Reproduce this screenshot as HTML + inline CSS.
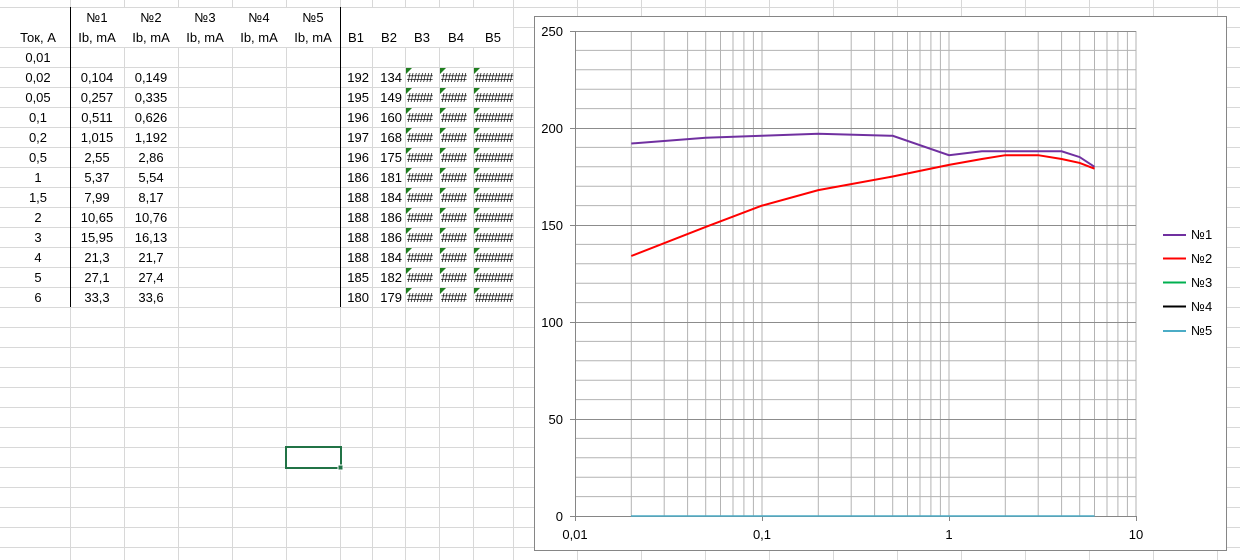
<!DOCTYPE html>
<html><head><meta charset="utf-8"><style>
body{margin:0;background:#fff;width:1240px;height:560px;overflow:hidden}
svg{display:block}
text{font-family:"Liberation Sans",sans-serif;font-size:13px;fill:#000}
</style></head><body>
<svg width="1240" height="560" viewBox="0 0 1240 560">
<g stroke="#d8d8d8" stroke-width="1" fill="none">
<path d="M0 7.5H1240M0 27.5H1240M0 47.5H1240M0 67.5H1240M0 87.5H1240M0 107.5H1240M0 127.5H1240M0 147.5H1240M0 167.5H1240M0 187.5H1240M0 207.5H1240M0 227.5H1240M0 247.5H1240M0 267.5H1240M0 287.5H1240M0 307.5H1240M0 327.5H1240M0 347.5H1240M0 367.5H1240M0 387.5H1240M0 407.5H1240M0 427.5H1240M0 447.5H1240M0 467.5H1240M0 487.5H1240M0 507.5H1240M0 527.5H1240M0 547.5H1240"/>
<path d="M70.5 0V560M124.5 0V560M178.5 0V560M232.5 0V560M286.5 0V560M340.5 0V560M372.5 0V560M405.5 0V560M439.5 0V560M473.5 0V560M513.5 0V560M577.5 0V560M641.5 0V560M705.5 0V560M769.5 0V560M833.5 0V560M897.5 0V560M961.5 0V560M1025.5 0V560M1089.5 0V560M1153.5 0V560M1217.5 0V560"/>
</g>
<rect x="0" y="8" width="513" height="39" fill="#fff"/>
<path d="M70.5 7V307M340.5 7V307" stroke="#000" stroke-width="1"/>
<g text-anchor="middle">
<text x="97" y="22">№1</text><text x="151" y="22">№2</text><text x="205" y="22">№3</text><text x="259" y="22">№4</text><text x="313" y="22">№5</text>
<text x="38" y="42">Ток, А</text><text x="97" y="42">Ib, mA</text><text x="151" y="42">Ib, mA</text><text x="205" y="42">Ib, mA</text><text x="259" y="42">Ib, mA</text><text x="313" y="42">Ib, mA</text>
<text x="356" y="42">B1</text><text x="389" y="42">B2</text><text x="422" y="42">B3</text><text x="456" y="42">B4</text><text x="493" y="42">B5</text>
<text x="38" y="62">0,01</text>
<text x="38" y="82">0,02</text><text x="97" y="82">0,104</text><text x="151" y="82">0,149</text>
<text x="38" y="102">0,05</text><text x="97" y="102">0,257</text><text x="151" y="102">0,335</text>
<text x="38" y="122">0,1</text><text x="97" y="122">0,511</text><text x="151" y="122">0,626</text>
<text x="38" y="142">0,2</text><text x="97" y="142">1,015</text><text x="151" y="142">1,192</text>
<text x="38" y="162">0,5</text><text x="97" y="162">2,55</text><text x="151" y="162">2,86</text>
<text x="38" y="182">1</text><text x="97" y="182">5,37</text><text x="151" y="182">5,54</text>
<text x="38" y="202">1,5</text><text x="97" y="202">7,99</text><text x="151" y="202">8,17</text>
<text x="38" y="222">2</text><text x="97" y="222">10,65</text><text x="151" y="222">10,76</text>
<text x="38" y="242">3</text><text x="97" y="242">15,95</text><text x="151" y="242">16,13</text>
<text x="38" y="262">4</text><text x="97" y="262">21,3</text><text x="151" y="262">21,7</text>
<text x="38" y="282">5</text><text x="97" y="282">27,1</text><text x="151" y="282">27,4</text>
<text x="38" y="302">6</text><text x="97" y="302">33,3</text><text x="151" y="302">33,6</text>
</g>
<g text-anchor="end">
<text x="369" y="82">192</text><text x="402" y="82">134</text>
<text x="369" y="102">195</text><text x="402" y="102">149</text>
<text x="369" y="122">196</text><text x="402" y="122">160</text>
<text x="369" y="142">197</text><text x="402" y="142">168</text>
<text x="369" y="162">196</text><text x="402" y="162">175</text>
<text x="369" y="182">186</text><text x="402" y="182">181</text>
<text x="369" y="202">188</text><text x="402" y="202">184</text>
<text x="369" y="222">188</text><text x="402" y="222">186</text>
<text x="369" y="242">188</text><text x="402" y="242">186</text>
<text x="369" y="262">188</text><text x="402" y="262">184</text>
<text x="369" y="282">185</text><text x="402" y="282">182</text>
<text x="369" y="302">180</text><text x="402" y="302">179</text>
</g>
<g style="font-size:12px;letter-spacing:-1px">
<text x="407" y="82">####</text><text x="441" y="82">####</text><text x="475" y="82">######</text>
<text x="407" y="102">####</text><text x="441" y="102">####</text><text x="475" y="102">######</text>
<text x="407" y="122">####</text><text x="441" y="122">####</text><text x="475" y="122">######</text>
<text x="407" y="142">####</text><text x="441" y="142">####</text><text x="475" y="142">######</text>
<text x="407" y="162">####</text><text x="441" y="162">####</text><text x="475" y="162">######</text>
<text x="407" y="182">####</text><text x="441" y="182">####</text><text x="475" y="182">######</text>
<text x="407" y="202">####</text><text x="441" y="202">####</text><text x="475" y="202">######</text>
<text x="407" y="222">####</text><text x="441" y="222">####</text><text x="475" y="222">######</text>
<text x="407" y="242">####</text><text x="441" y="242">####</text><text x="475" y="242">######</text>
<text x="407" y="262">####</text><text x="441" y="262">####</text><text x="475" y="262">######</text>
<text x="407" y="282">####</text><text x="441" y="282">####</text><text x="475" y="282">######</text>
<text x="407" y="302">####</text><text x="441" y="302">####</text><text x="475" y="302">######</text>
</g>
<g fill="#1e7e1e">
<path d="M406 68h6l-6 6zM440 68h6l-6 6zM474 68h6l-6 6zM406 88h6l-6 6zM440 88h6l-6 6zM474 88h6l-6 6zM406 108h6l-6 6zM440 108h6l-6 6zM474 108h6l-6 6zM406 128h6l-6 6zM440 128h6l-6 6zM474 128h6l-6 6zM406 148h6l-6 6zM440 148h6l-6 6zM474 148h6l-6 6zM406 168h6l-6 6zM440 168h6l-6 6zM474 168h6l-6 6zM406 188h6l-6 6zM440 188h6l-6 6zM474 188h6l-6 6zM406 208h6l-6 6zM440 208h6l-6 6zM474 208h6l-6 6zM406 228h6l-6 6zM440 228h6l-6 6zM474 228h6l-6 6zM406 248h6l-6 6zM440 248h6l-6 6zM474 248h6l-6 6zM406 268h6l-6 6zM440 268h6l-6 6zM474 268h6l-6 6zM406 288h6l-6 6zM440 288h6l-6 6zM474 288h6l-6 6z"/>
</g>
<rect x="286" y="447" width="55" height="21" fill="none" stroke="#217346" stroke-width="2"/>
<rect x="338" y="465" width="5" height="5" fill="#217346" stroke="#fff" stroke-width="1"/>

<rect x="534.5" y="16.5" width="692" height="534" fill="#fff" stroke="#868686"/>
<g stroke="#b3b3b3" fill="none">
<path d="M575 496.6H1136M575 477.2H1136M575 457.8H1136M575 438.4H1136M575 399.6H1136M575 380.2H1136M575 360.8H1136M575 341.4H1136M575 302.6H1136M575 283.2H1136M575 263.8H1136M575 244.4H1136M575 205.6H1136M575 186.2H1136M575 166.8H1136M575 147.4H1136M575 108.6H1136M575 89.2H1136M575 69.8H1136M575 50.4H1136"/>
<path d="M631.3 31V516M664.2 31V516M687.6 31V516M705.7 31V516M720.5 31V516M733 31V516M743.9 31V516M753.4 31V516M762 31V516M818.3 31V516M851.2 31V516M874.6 31V516M892.7 31V516M907.5 31V516M920 31V516M930.9 31V516M940.4 31V516M949 31V516M1005.3 31V516M1038.2 31V516M1061.6 31V516M1079.7 31V516M1094.5 31V516M1107 31V516M1117.9 31V516M1127.4 31V516M1136 31V516"/>
</g>
<path d="M575 419.5H1136M575 322.5H1136M575 225.5H1136M575 128.5H1136M575 31.5H1136" stroke="#8c8c8c" fill="none"/>
<path d="M575.5 31V516M570 31.5H575M570 128.5H575M570 225.5H575M570 322.5H575M570 419.5H575M570 516.5H575M575 516.5H1136M575.5 516V521M762.5 516V521M949.5 516V521M1136.5 516V521" stroke="#868686" fill="none"/>
<g text-anchor="end">
<text x="563" y="36">250</text><text x="563" y="133">200</text><text x="563" y="230">150</text><text x="563" y="327">100</text><text x="563" y="424">50</text><text x="563" y="521">0</text>
</g>
<g text-anchor="middle">
<text x="575" y="539">0,01</text><text x="762" y="539">0,1</text><text x="949" y="539">1</text><text x="1136" y="539">10</text>
</g>
<polyline fill="none" stroke="#7030a0" stroke-width="2" points="631.3,143.5 705.7,137.7 762,135.8 818.3,133.8 892.7,135.8 949,155.2 981.9,151.3 1005.3,151.3 1038.2,151.3 1061.6,151.3 1079.7,157.1 1094.5,166.8"/>
<polyline fill="none" stroke="#ff0000" stroke-width="2" points="631.3,256 705.7,226.9 762,205.6 818.3,190.1 892.7,176.5 949,164.9 981.9,159 1005.3,155.2 1038.2,155.2 1061.6,159 1079.7,162.9 1094.5,168.7"/>
<path d="M631 516H1094.5" stroke="#4bacc6" stroke-width="1.5"/>
<g stroke-width="2">
<path d="M1163 235H1186" stroke="#7030a0"/>
<path d="M1163 258.5H1186" stroke="#ff0000"/>
<path d="M1163 282.5H1186" stroke="#00b050"/>
<path d="M1163 306.5H1186" stroke="#000"/>
<path d="M1163 331H1186" stroke="#4bacc6"/>
</g>
<g style="font-size:12px">
<text x="1191" y="239">№1</text><text x="1191" y="263">№2</text><text x="1191" y="287">№3</text><text x="1191" y="311">№4</text><text x="1191" y="335">№5</text>
</g>
</svg>
</body></html>
